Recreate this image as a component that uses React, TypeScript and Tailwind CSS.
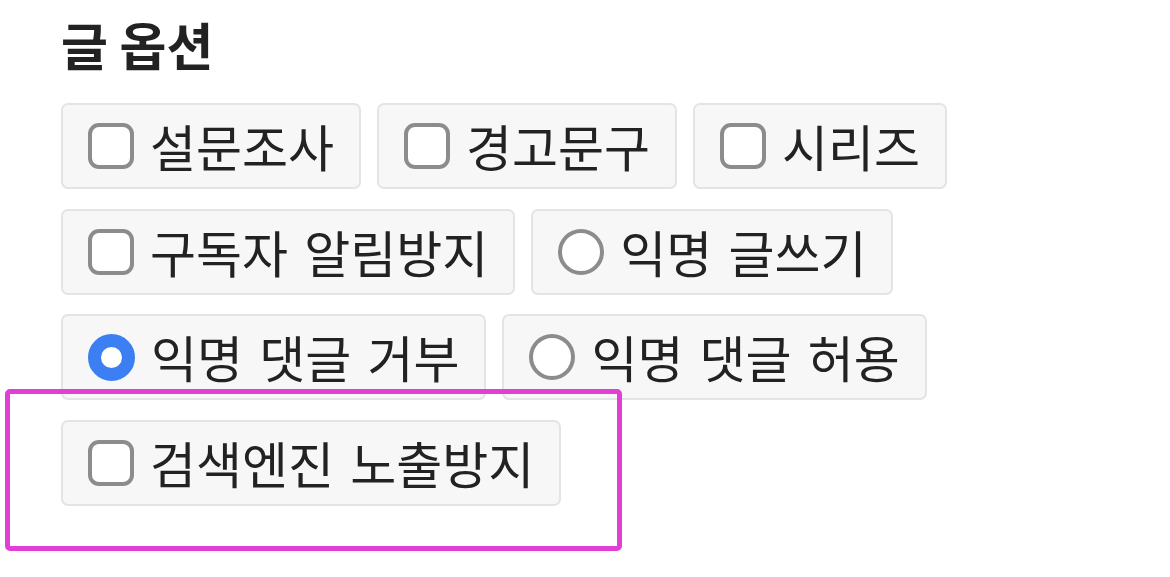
import React from 'react'

type Opt = { label: string; kind: 'check' | 'radio'; checked?: boolean }

const rows: Opt[][] = [
  [
    { label: '설문조사', kind: 'check' },
    { label: '경고문구', kind: 'check' },
    { label: '시리즈', kind: 'check' },
  ],
  [
    { label: '구독자 알림방지', kind: 'check' },
    { label: '익명 글쓰기', kind: 'radio' },
  ],
  [
    { label: '익명 댓글 거부', kind: 'radio', checked: true },
    { label: '익명 댓글 허용', kind: 'radio' },
  ],
]

function Mark({ kind, checked }: { kind: Opt['kind']; checked?: boolean }) {
  if (kind === 'check') {
    return <span className="block w-[46px] h-[46px] shrink-0 rounded-[11px] border-[4px] border-[#8c8c8c] bg-white" />
  }
  if (checked) {
    return <span className="block w-[47px] h-[47px] shrink-0 rounded-full border-[13px] border-[#3b7ff2] bg-white" />
  }
  return <span className="block w-[46px] h-[46px] shrink-0 rounded-full border-[4px] border-[#8c8c8c] bg-white" />
}

function OptionButton({ opt }: { opt: Opt }) {
  return (
    <label className="flex items-center gap-[16px] h-[86px] pl-[25px] pr-[25px] bg-[#f7f7f7] border-2 border-[#e4e4e4] rounded-[7px] text-[50px] text-[#222] leading-none">
      <Mark kind={opt.kind} checked={opt.checked} />
      <span className="whitespace-nowrap pb-[2px] [word-spacing:5px]">{opt.label}</span>
    </label>
  )
}

export default function App() {
  return (
    <div
      className="relative w-[1170px] h-[577px] bg-white pl-[61px] pt-[12px]"
      style={{ fontFamily: '"Noto Sans CJK KR", "Noto Sans", sans-serif' }}
    >
      <h2 className="text-[51px] font-bold text-[#222] leading-[64px] h-[64px]">글 옵션</h2>
      <div className="mt-[27px] flex flex-col gap-[19.5px]">
        {rows.map((row, i) => (
          <div key={i} className="flex gap-[16px]">
            {row.map((o) => (
              <OptionButton key={o.label} opt={o} />
            ))}
          </div>
        ))}
        <div className="relative flex">
          <OptionButton opt={{ label: '검색엔진 노출방지', kind: 'check' }} />
          {/* highlight frame */}
          <div className="absolute left-[-56px] top-[-31px] w-[617px] h-[162px] border-[5px] border-[#e23fd6] rounded-[5px] pointer-events-none" />
        </div>
      </div>
    </div>
  )
}
